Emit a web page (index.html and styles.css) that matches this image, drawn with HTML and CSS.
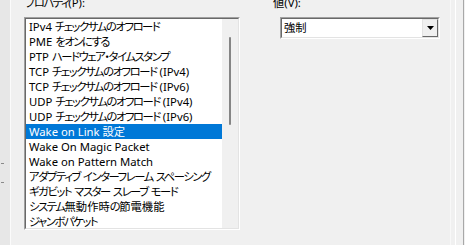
FILE: index.html
```html
<!DOCTYPE html>
<html lang="ja">
<head>
<meta charset="utf-8">
<title>プロパティ</title>
<link rel="stylesheet" href="styles.css">
</head>
<body>
<div class="gutter"><i class="tick t1"></i><i class="tick t2"></i></div>
<main class="page">
  <section class="prop">
    <div class="label"><span class="kana">プロパティ</span>(P):</div>
    <div class="listbox">
      <div class="listbox-inner">
        <ul class="items">
          <li class="item">IPv4 <span class="kana">チェックサムのオフロード</span></li>
          <li class="item">PME <span class="kana">をオンにする</span></li>
          <li class="item">PTP <span class="kana">ハードウェア・タイムスタンプ</span></li>
          <li class="item">TCP <span class="kana">チェックサムのオフロード</span> (IPv4)</li>
          <li class="item">TCP <span class="kana">チェックサムのオフロード</span> (IPv6)</li>
          <li class="item">UDP <span class="kana">チェックサムのオフロード</span> (IPv4)</li>
          <li class="item">UDP <span class="kana">チェックサムのオフロード</span> (IPv6)</li>
          <li class="item selected">Wake on Link 設定</li>
          <li class="item">Wake On Magic Packet</li>
          <li class="item">Wake on Pattern Match</li>
          <li class="item"><span class="kana">アダプティブ</span> <span class="kana">インターフレーム</span> <span class="kana">スペーシング</span></li>
          <li class="item"><span class="kana">ギガビット</span> <span class="kana">マスター</span> <span class="kana">スレーブ</span> <span class="kana">モード</span></li>
          <li class="item"><span class="kana">システム</span>無動作時<span class="kana">の</span>節電機能</li>
          <li class="item"><span class="kana">ジャンボパケット</span></li>
        </ul>
        <div class="vscroll"><div class="thumb"></div></div>
      </div>
    </div>
  </section>
  <section class="value">
    <div class="label">値(V):</div>
    <div class="combo">
      <div class="combo-inner">
        <span class="combo-text">強制</span>
        <span class="combo-btn"><svg class="arrow" width="7" height="4" viewBox="0 0 7 4"><path d="M0 0H7L3.5 4Z" fill="#000"/></svg></span>
      </div>
    </div>
  </section>
  <div class="rim"><div class="rim-inner"></div></div>
</main>
</body>
</html>
```
FILE: styles.css
```css
html, body {
  margin: 0;
  padding: 0;
}
body {
  width: 465px;
  height: 245px;
  overflow: hidden;
  background: #f0f0f0;
  display: flex;
  font-family: "Noto Sans", "Noto Sans CJK JP", sans-serif;
  font-size: 11.3px;
  font-feature-settings: "palt";
  color: #000;
}
.kana {
  letter-spacing: -1.4px;
}
.gutter {
  width: 10px;
  flex: none;
  background: #e7e7e7;
  border-right: 1px solid #fbfbfb;
  display: flex;
  flex-direction: column;
}
.tick {
  display: block;
  width: 3px;
  height: 1px;
  margin-left: 1px;
  background: #8a8a8a;
}
.t1 { margin-top: 163px; }
.t2 { margin-top: 18px; }

.page {
  flex: 1;
  display: flex;
  padding-left: 13px;
  margin-top: -5px;
}
.label {
  height: 15px;
  line-height: 15px;
  margin-bottom: 7px;
  white-space: nowrap;
}
.prop {
  width: 216px;
  flex: none;
}
.prop .label {
  padding-left: 1px;
}
.listbox {
  border: 1px solid;
  border-color: #a0a0a0 #ffffff #ffffff #a0a0a0;
}
.listbox-inner {
  border: 1px solid;
  border-color: #696969 #e3e3e3 #e3e3e3 #696969;
  display: flex;
  height: 209px;
  background: #fff;
  overflow: hidden;
}
.items {
  list-style: none;
  margin: 0;
  padding: 0;
  width: 196px;
  flex: none;
}
.item {
  height: 15px;
  line-height: 15px;
  padding-left: 3px;
  white-space: nowrap;
  overflow: hidden;
}
.item.selected {
  background: #0078d7;
  color: #fff;
}
.vscroll {
  width: 16px;
  flex: none;
  background: #f0f0f0;
  padding-top: 18px;
  display: flex;
  justify-content: center;
  align-items: flex-start;
}
.thumb {
  width: 2px;
  height: 88px;
  background: #858585;
  border-radius: 1px;
}

.value {
  width: 167px;
  margin-left: 33px;
  flex: none;
}
.combo {
  margin-left: 7px;
  width: 160px;
  height: 22px;
  box-sizing: border-box;
  border: 1px solid;
  border-color: #a0a0a0 #ffffff #ffffff #a0a0a0;
}
.combo-inner {
  height: 100%;
  box-sizing: border-box;
  border: 1px solid;
  border-color: #696969 #e3e3e3 #e3e3e3 #696969;
  background: #fff;
  display: flex;
}
.combo-text {
  flex: 1;
  padding-left: 2px;
  line-height: 18px;
}
.combo-btn {
  width: 16px;
  flex: none;
  box-sizing: border-box;
  background: #f0f0f0;
  border: 1px solid;
  border-color: #e3e3e3 #696969 #696969 #e3e3e3;
  display: flex;
  align-items: center;
  justify-content: center;
}
.arrow {
  display: block;
}

.rim {
  margin-left: 10px;
  width: 15px;
  flex: none;
  box-sizing: border-box;
  border-left: 1px solid #f8f8f8;
  padding-left: 4px;
  margin-top: 5px;
}
.rim-inner {
  width: 9px;
  height: 100%;
  box-sizing: border-box;
  border-left: 1px solid #ffffff;
  border-right: 1px solid #a8a8a8;
}
```
